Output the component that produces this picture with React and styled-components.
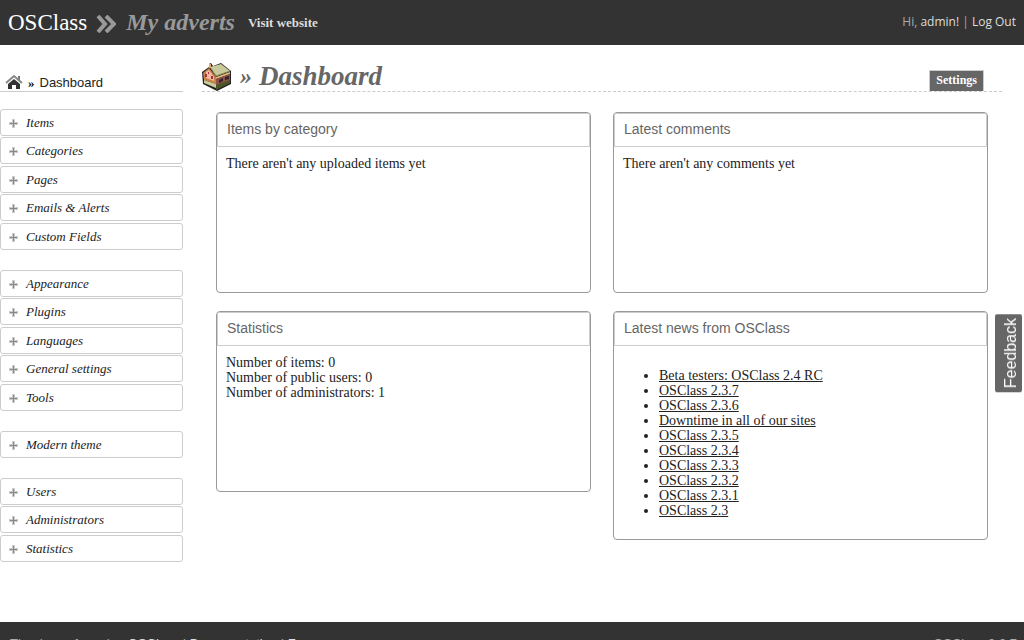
import React from 'react'
import styled, { createGlobalStyle } from 'styled-components'

const serif = "Georgia, 'Liberation Serif', serif";
const sans = "Arial, 'Liberation Sans', sans-serif";

const GlobalStyle = createGlobalStyle`
  body {
    margin: 0;
    background-color: #fff;
    color: #222;
    font-family: ${serif};
    font-size: 14px;
    line-height: 15px;
  }
`;

const TopBar = styled.header`
  display: flex;
  align-items: center;
  height: 45px;
  padding: 0 8px;
  background-color: #333;
`;

const Logo = styled.a`
  color: #fff;
  font-size: 23px;
  line-height: 28px;
  text-decoration: none;
`;

const Chevrons = styled.svg`
  width: 20px;
  height: 18px;
  margin: 2px 10px 0 9px;
`;

const SiteName = styled.span`
  margin-right: 13px;
  color: #999;
  font-size: 24px;
  font-style: italic;
  font-weight: bold;
  line-height: 28px;
  padding-bottom: 2px;
`;

const VisitLink = styled.a`
  color: #ddd;
  font-size: 13px;
  font-weight: bold;
  text-decoration: none;
`;

const Account = styled.div`
  margin-left: auto;
  padding-bottom: 2px;
  color: #aaa;
  font-family: 'Open Sans', sans-serif;
  font-size: 12px;
`;

const AccountLink = styled.a`
  color: #ddd;
  text-decoration: none;
`;

const Page = styled.div`
  display: flex;
  align-items: flex-start;
  padding-bottom: 60px;
`;

const Sidebar = styled.aside`
  flex: none;
  width: 183px;
`;

const Breadcrumb = styled.div`
  display: flex;
  align-items: center;
  gap: 5px;
  box-sizing: border-box;
  height: 47px;
  margin-bottom: 17px;
  padding: 28px 5px 0;
  border-bottom: 1px solid #ccc;
  color: #000;
`;

const BreadcrumbArrow = styled.span`
  font-size: 13px;
  font-weight: bold;
`;

const BreadcrumbLink = styled.a`
  color: #222;
  font-family: ${sans};
  font-size: 13px;
  text-decoration: none;
`;

const Menu = styled.ul`
  margin: 0 0 20px;
  padding: 0;
  list-style: none;

  &:last-child {
    margin-bottom: 0;
  }
`;

const MenuItem = styled.li`
  margin-bottom: 1px;

  &:nth-child(even) {
    margin-bottom: 2px;
  }

  &:last-child {
    margin-bottom: 0;
  }
`;

const MenuLink = styled.a`
  display: flex;
  align-items: center;
  gap: 8px;
  box-sizing: border-box;
  height: 27px;
  padding: 0 8px;
  border: 1px solid #ccc;
  border-radius: 3px;
  color: #222;
  font-size: 13px;
  font-style: italic;
  text-decoration: none;
`;

const Plus = styled.svg`
  width: 9px;
  height: 9px;
  margin-top: 2px;
`;

const Main = styled.main`
  flex: 1;
  margin: 0 22px 0 19px;
`;

const TitleBar = styled.div`
  display: flex;
  align-items: flex-end;
  box-sizing: border-box;
  height: 47px;
  margin-bottom: 20px;
  border-bottom: 1px dashed #ccc;
`;

const TitleArrow = styled.span`
  margin: 0 7px 3px 8px;
  color: #666;
  font-size: 24px;
  font-style: italic;
  font-weight: bold;
  line-height: 24px;
`;

const Title = styled.h1`
  margin: 0 0 3px;
  color: #666;
  font-size: 27px;
  font-style: italic;
  line-height: 24px;
`;

const SettingsButton = styled.button`
  margin: 0 18px 0 auto;
  padding: 2px 6px 3px;
  border: 1px solid #ccc;
  border-bottom: 0;
  background-color: #666;
  color: #fff;
  font-family: ${serif};
  font-size: 12px;
  font-weight: bold;
  line-height: 15px;
`;

const Cards = styled.div`
  display: grid;
  grid-template-columns: 1fr 1fr;
  align-items: start;
  gap: 18px 22px;
  padding: 0 14px;
`;

const CardBox = styled.section`
  box-sizing: border-box;
  min-height: 181px;
  border: 1px solid #999;
  border-radius: 4px;
`;

const CardTitle = styled.h2`
  margin: 0;
  padding: 7px 9px 9px;
  border: 1px solid #ccc;
  border-radius: 2px 2px 0 0;
  color: #666;
  font-family: ${sans};
  font-size: 14px;
  font-weight: normal;
  line-height: 16px;
`;

const CardBody = styled.div`
  padding: 9px 9px 8px;
`;

const NewsList = styled.ul`
  margin: 13px 0;
  padding-left: 36px;
`;

const NewsLink = styled.a`
  color: #222;
`;

const Footer = styled.footer`
  display: flex;
  justify-content: space-between;
  padding: 14px 7px 15px 10px;
  background-color: #333;
  color: #aaa;
  font-family: ${sans};
  font-size: 13px;
`;

const FooterLink = styled.a`
  color: #ddd;
  text-decoration: none;
`;

const FeedbackButton = styled.button`
  position: fixed;
  top: 314px;
  right: 2px;
  padding: 4px 6px 4px 2px;
  border: 0;
  border-radius: 2px;
  background-color: #666;
  color: #fff;
  font-family: ${sans};
  font-size: 16px;
  line-height: 19px;
  writing-mode: vertical-rl;
  transform: rotate(180deg);
`;

const menus = [
  ['Items', 'Categories', 'Pages', 'Emails & Alerts', 'Custom Fields'],
  ['Appearance', 'Plugins', 'Languages', 'General settings', 'Tools'],
  ['Modern theme'],
  ['Users', 'Administrators', 'Statistics'],
];

const news = [
  'Beta testers: OSClass 2.4 RC',
  'OSClass 2.3.7',
  'OSClass 2.3.6',
  'Downtime in all of our sites',
  'OSClass 2.3.5',
  'OSClass 2.3.4',
  'OSClass 2.3.3',
  'OSClass 2.3.2',
  'OSClass 2.3.1',
  'OSClass 2.3',
];

const HomeIcon = () => (
  <svg width="18" height="16" viewBox="0 0 18 16" aria-hidden="true">
    <path d="M13 2h2v4h-2z" fill="#777"/>
    <path d="M1 9l8-7 8 7" fill="none" stroke="#888" strokeWidth="2"/>
    <path d="M3 10l6-5 6 5v5h-4v-4H7v4H3z" fill="#333"/>
  </svg>
)

const HouseIcon = () => (
  <svg width="30" height="28" viewBox="0 0 30 28" aria-hidden="true">
    <path d="M0 9l7-5V1l2-1 2 3 8-3 10 8v13l-14 7L1 21z" fill="#222"/>
    <path d="M1 10l6-5 7 9v7L2 17z" fill="#c98345"/>
    <path d="M4 9l3-2 5 7v4l-8-3z" fill="#f3b7a5"/>
    <path d="M14 14l14-5v2l-14 5z" fill="#e3b97d"/>
    <path d="M14 16l14-5v7l-14 5z" fill="#8d5248"/>
    <path d="M17 17l4-2v3l-4 2zM23 14l4-1v3l-4 1z" fill="#3a1f2c"/>
    <path d="M8 4l11-3 9 7-14 5z" fill="#c8ca9c"/>
    <path d="M8 4l6 9 14-5" fill="none" stroke="#8b8d5c" strokeWidth="1"/>
    <path d="M2 17l12 4v4L2 20z" fill="#c8ca9c"/>
    <path d="M14 22l14-5v3l-14 7z" fill="#4c5527"/>
    <path d="M7 1h2v4H7z" fill="#eba36e"/>
    <path d="M3 11h2v3H3zM9 13h2v3H9zM6 9h1v2H6z" fill="#a8323a"/>
  </svg>
)

const Card = ({ title, children }) => (
  <CardBox>
    <CardTitle>{title}</CardTitle>
    <CardBody>{children}</CardBody>
  </CardBox>
)

class App extends React.Component {
  componentDidMount() {
    document.title = 'OSClass';
  }

  render() {
    return (
      <>
        <GlobalStyle/>
        <TopBar>
          <Logo href="#">OSClass</Logo>
          <Chevrons viewBox="0 0 20 18" aria-hidden="true">
            <path
              d="M2 1l7 8-7 8M10 1l8 8-8 8"
              fill="none"
              stroke="#999"
              strokeWidth="4"
            />
          </Chevrons>
          <SiteName>My adverts</SiteName>
          <VisitLink href="#">Visit website</VisitLink>
          <Account>
            Hi, <AccountLink href="#">admin!</AccountLink> | <AccountLink href="#">Log Out</AccountLink>
          </Account>
        </TopBar>
        <Page>
          <Sidebar>
            <Breadcrumb>
              <HomeIcon/>
              <BreadcrumbArrow>»</BreadcrumbArrow>
              <BreadcrumbLink href="#">Dashboard</BreadcrumbLink>
            </Breadcrumb>
            {menus.map(items => (
              <Menu key={items[0]}>
                {items.map(item => (
                  <MenuItem key={item}>
                    <MenuLink href="#">
                      <Plus viewBox="0 0 9 9" aria-hidden="true">
                        <path d="M3 0h3v3h3v3H6v3H3V6H0V3h3z" fill="#ccc"/>
                        <path d="M4 1h1v3h3v1H5v3H4V5H1V4h3z" fill="#888"/>
                      </Plus>
                      {item}
                    </MenuLink>
                  </MenuItem>
                ))}
              </Menu>
            ))}
          </Sidebar>
          <Main>
            <TitleBar>
              <HouseIcon/>
              <TitleArrow>»</TitleArrow>
              <Title>Dashboard</Title>
              <SettingsButton type="button">Settings</SettingsButton>
            </TitleBar>
            <Cards>
              <Card title="Items by category">There aren't any uploaded items yet</Card>
              <Card title="Latest comments">There aren't any comments yet</Card>
              <Card title="Statistics">
                <div>Number of items: 0</div>
                <div>Number of public users: 0</div>
                <div>Number of administrators: 1</div>
              </Card>
              <Card title="Latest news from OSClass">
                <NewsList>
                  {news.map(item => (
                    <li key={item}><NewsLink href="#">{item}</NewsLink></li>
                  ))}
                </NewsList>
              </Card>
            </Cards>
          </Main>
        </Page>
        <Footer>
          <div>
            Thank you for using <FooterLink href="#">OSClass</FooterLink> | <FooterLink href="#">Documentation</FooterLink> | <FooterLink href="#">Forums</FooterLink>
          </div>
          <div>OSClass 2.3.7</div>
        </Footer>
        <FeedbackButton type="button">Feedback</FeedbackButton>
      </>
    )
  }
}

export default App
